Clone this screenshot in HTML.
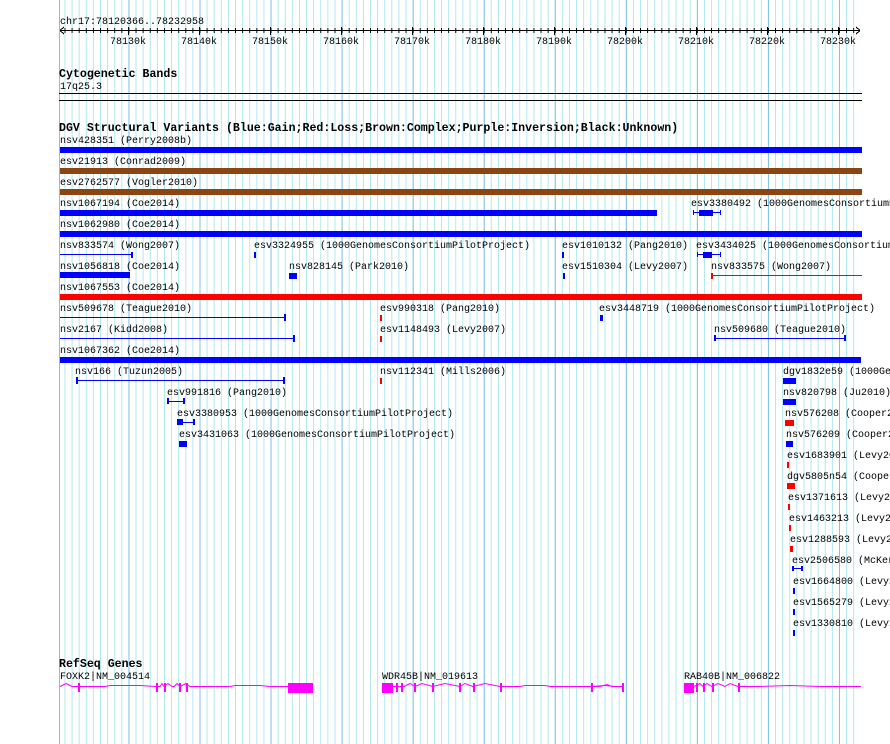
<!DOCTYPE html>
<html><head><meta charset="utf-8"><style>
html,body{margin:0;padding:0;background:#fff;width:890px;height:744px;overflow:hidden}
svg{display:block}
text{font-family:"Liberation Mono",monospace;font-size:10px;fill:#000;transform:translateY(-1px)}
.b{font-weight:bold;font-size:11.6px}
</style></head><body>
<svg width="890" height="744" xmlns="http://www.w3.org/2000/svg" shape-rendering="crispEdges">
<defs>
<pattern id="mn" patternUnits="userSpaceOnUse" x="57.4" y="0" width="7.1053" height="744"><rect x="0" y="0" width="1" height="744" fill="#aee8f0"/></pattern>
<pattern id="mj" patternUnits="userSpaceOnUse" x="57.4" y="0" width="71.053" height="744"><rect x="0" y="0" width="1" height="744" fill="#80c0ea"/></pattern>
<pattern id="tk" patternUnits="userSpaceOnUse" x="57.4" y="28" width="7.1053" height="5"><rect x="0" y="0" width="1" height="5" fill="#000"/></pattern>
</defs>
<rect x="62" y="0" width="798" height="744" fill="url(#mn)"/>
<rect x="62" y="0" width="798" height="744" fill="url(#mj)"/>
<rect x="59" y="0" width="1" height="744" fill="#80c0ea"/>

<text x="60" y="25">chr17:78120366..78232958</text>
<rect x="60" y="30" width="800" height="1" fill="#000"/>
<path d="M60 30.5 L64 27 M60 30.5 L64 34 M860 30.5 L856 27 M860 30.5 L856 34" stroke="#000" stroke-width="1" fill="none"/>
<rect x="62" y="28" width="798" height="5" fill="url(#tk)"/>
<g fill="#000">
<rect x="128" y="27" width="1" height="8"/><rect x="199" y="27" width="1" height="8"/><rect x="270" y="27" width="1" height="8"/><rect x="341" y="27" width="1" height="8"/><rect x="412" y="27" width="1" height="8"/><rect x="483" y="27" width="1" height="8"/><rect x="554" y="27" width="1" height="8"/><rect x="625" y="27" width="1" height="8"/><rect x="696" y="27" width="1" height="8"/><rect x="767" y="27" width="1" height="8"/><rect x="838" y="27" width="1" height="8"/>
</g>
<g text-anchor="middle">
<text x="128" y="45">78130k</text><text x="199" y="45">78140k</text><text x="270" y="45">78150k</text><text x="341" y="45">78160k</text><text x="412" y="45">78170k</text><text x="483" y="45">78180k</text><text x="554" y="45">78190k</text><text x="625" y="45">78200k</text><text x="696" y="45">78210k</text><text x="767" y="45">78220k</text><text x="838" y="45">78230k</text>
</g>

<text class="b" x="59" y="78">Cytogenetic Bands</text>
<text x="60" y="90">17q25.3</text>
<rect x="59" y="93" width="803" height="1" fill="#000"/>
<rect x="59" y="100" width="803" height="1" fill="#000"/>

<text class="b" x="59" y="132">DGV Structural Variants (Blue:Gain;Red:Loss;Brown:Complex;Purple:Inversion;Black:Unknown)</text>
<text x="60" y="144">nsv428351 (Perry2008b)</text>
<rect x="60" y="147" width="802" height="6" fill="#0000ff"/>
<text x="60" y="165">esv21913 (Conrad2009)</text>
<rect x="60" y="168" width="802" height="6" fill="#8b4513"/>
<text x="60" y="186">esv2762577 (Vogler2010)</text>
<rect x="60" y="189" width="802" height="6" fill="#8b4513"/>
<text x="60" y="207">nsv1067194 (Coe2014)</text>
<rect x="60" y="210" width="597" height="6" fill="#0000ff"/>
<text x="691" y="207">esv3380492 (1000GenomesConsortiumPilotProject)</text>
<g fill="#0000ff"><rect x="693" y="212" width="27" height="1"/><rect x="693" y="210" width="1" height="5"/><rect x="720" y="210" width="1" height="5"/><rect x="699" y="210" width="14" height="6"/></g>
<text x="60" y="228">nsv1062980 (Coe2014)</text>
<rect x="60" y="231" width="802" height="6" fill="#0000ff"/>

<text x="60" y="249">nsv833574 (Wong2007)</text>
<g fill="#0000ff"><rect x="60" y="254" width="72" height="1"/><rect x="131" y="252" width="2" height="6"/>
<rect x="254" y="252" width="2" height="6"/><rect x="562" y="252" width="2" height="6"/>
<rect x="697" y="254" width="24" height="1"/><rect x="697" y="252" width="1" height="5"/><rect x="720" y="252" width="1" height="5"/><rect x="703" y="252" width="9" height="6"/></g>
<text x="254" y="249">esv3324955 (1000GenomesConsortiumPilotProject)</text>
<text x="562" y="249">esv1010132 (Pang2010)</text>
<text x="696" y="249">esv3434025 (1000GenomesConsortiumPilotProject)</text>

<text x="60" y="270">nsv1056818 (Coe2014)</text>
<text x="289" y="270">nsv828145 (Park2010)</text>
<text x="562" y="270">esv1510304 (Levy2007)</text>
<text x="711" y="270">nsv833575 (Wong2007)</text>
<g fill="#0000ff"><rect x="60" y="272" width="70" height="6"/><rect x="289" y="273" width="8" height="6"/><rect x="563" y="273" width="2" height="6"/></g>
<g fill="#ff0000"><rect x="711" y="275" width="151" height="1"/><rect x="711" y="273" width="2" height="6"/></g>

<text x="60" y="291">nsv1067553 (Coe2014)</text>
<rect x="60" y="294" width="802" height="6" fill="#ff0000"/>

<text x="60" y="312">nsv509678 (Teague2010)</text>
<text x="380" y="312">esv990318 (Pang2010)</text>
<text x="599" y="312">esv3448719 (1000GenomesConsortiumPilotProject)</text>
<g fill="#0000ff"><rect x="60" y="317" width="225" height="1"/><rect x="284" y="314" width="2" height="7"/><rect x="600" y="315" width="3" height="6"/></g>
<rect x="380" y="315" width="2" height="6" fill="#ff0000"/>

<text x="60" y="333">nsv2167 (Kidd2008)</text>
<text x="380" y="333">esv1148493 (Levy2007)</text>
<text x="714" y="333">nsv509680 (Teague2010)</text>
<g fill="#0000ff"><rect x="60" y="338" width="234" height="1"/><rect x="293" y="335" width="2" height="7"/>
<rect x="714" y="338" width="131" height="1"/><rect x="714" y="335" width="2" height="6"/><rect x="844" y="335" width="2" height="6"/></g>
<rect x="380" y="336" width="2" height="6" fill="#ff0000"/>

<text x="60" y="354">nsv1067362 (Coe2014)</text>
<rect x="60" y="357" width="801" height="6" fill="#0000ff"/>

<text x="75" y="375">nsv166 (Tuzun2005)</text>
<text x="380" y="375">nsv112341 (Mills2006)</text>
<text x="783" y="375">dgv1832e59 (1000GenomesConsortiumPilotProject)</text>
<g fill="#0000ff"><rect x="76" y="380" width="208" height="1"/><rect x="76" y="377" width="2" height="7"/><rect x="283" y="377" width="2" height="7"/><rect x="783" y="378" width="13" height="6"/></g>
<rect x="380" y="378" width="2" height="6" fill="#ff0000"/>

<text x="167" y="396">esv991816 (Pang2010)</text>
<text x="783" y="396">nsv820798 (Ju2010)</text>
<g fill="#0000ff"><rect x="167" y="401" width="17" height="1"/><rect x="167" y="398" width="2" height="6"/><rect x="183" y="398" width="2" height="6"/><rect x="783" y="399" width="13" height="6"/></g>

<text x="177" y="417">esv3380953 (1000GenomesConsortiumPilotProject)</text>
<text x="785" y="417">nsv576208 (Cooper2008)</text>
<g fill="#0000ff"><rect x="177" y="422" width="17" height="1"/><rect x="177" y="419" width="2" height="6"/><rect x="193" y="419" width="2" height="6"/><rect x="179" y="419" width="4" height="6"/></g>
<rect x="785" y="420" width="9" height="6" fill="#ff0000"/>

<text x="179" y="438">esv3431063 (1000GenomesConsortiumPilotProject)</text>
<text x="786" y="438">nsv576209 (Cooper2008)</text>
<g fill="#0000ff"><rect x="179" y="441" width="8" height="6"/><rect x="786" y="441" width="7" height="6"/></g>

<text x="787" y="459">esv1683901 (Levy2007)</text>
<rect x="787" y="462" width="2" height="6" fill="#ff0000"/>
<text x="787" y="480">dgv5805n54 (Cooper2008)</text>
<rect x="787" y="483" width="8" height="6" fill="#ff0000"/>
<text x="788" y="501">esv1371613 (Levy2007)</text>
<rect x="788" y="504" width="2" height="6" fill="#ff0000"/>
<text x="789" y="522">esv1463213 (Levy2007)</text>
<rect x="789" y="525" width="2" height="6" fill="#ff0000"/>
<text x="790" y="543">esv1288593 (Levy2007)</text>
<rect x="790" y="546" width="3" height="6" fill="#ff0000"/>
<text x="792" y="564">esv2506580 (McKernan2009)</text>
<g fill="#0000ff"><rect x="792" y="568" width="10" height="1"/><rect x="792" y="566" width="2" height="5"/><rect x="801" y="566" width="2" height="5"/></g>
<text x="793" y="585">esv1664800 (Levy2007)</text>
<rect x="793" y="588" width="2" height="6" fill="#0000ff"/>
<text x="793" y="606">esv1565279 (Levy2007)</text>
<rect x="793" y="609" width="2" height="6" fill="#0000ff"/>
<text x="793" y="627">esv1330810 (Levy2007)</text>
<rect x="793" y="630" width="2" height="6" fill="#0000ff"/>

<text class="b" x="59" y="668">RefSeq Genes</text>
<text x="60" y="680">FOXK2|NM_004514</text>
<text x="382" y="680">WDR45B|NM_019613</text>
<text x="684" y="680">RAB40B|NM_006822</text>
<g fill="none" stroke="#ff00ff" stroke-width="1" shape-rendering="auto">
<polyline points="60,686.5 66,683.5 72,686.5 78,686.5 105,686.5 110,685.5 140,685.5 156,686.5 160,686.5 162,683.5 164,686.5 168,683.5 172,686.5 174,686.5 177,683.5 180,686.5 186,683.5 190,686.5 230,686.5 235,685.5 260,685.5 270,686.5 288,686.5"/>
<polyline points="393,686.5 396,686.5 400,686.5 404,686.5 410,683.5 415,686.5 422,683.5 433,686.5 445,683.5 460,686.5 465,683.5 473,686.5 485,683.5 500,686.5 520,686.5 525,685.5 545,685.5 550,686.5 580,686.5 592,686.5 605,685.5 615,686.5 624,686.5"/>
<polyline points="560,686.5 575,686.5 591,686.5 600,686.5 607,684.5 612,686.5 623,686.5"/>
<polyline points="694,686.5 700,683.5 703,686.5 707,683.5 712,686.5 718,683.5 725,686.5 730,683.5 738,686.5 750,686.5 760,686.5 790,685.5 820,686.5 861,686.5"/>
</g>
<g fill="#ff00ff">
<rect x="78" y="683" width="2" height="9"/><rect x="156" y="683" width="2" height="9"/><rect x="164" y="683" width="2" height="9"/><rect x="179" y="683" width="2" height="9"/><rect x="186" y="683" width="2" height="9"/>
<rect x="288" y="683" width="25" height="10"/>
<rect x="382" y="683" width="11" height="10"/><rect x="396" y="683" width="2" height="9"/><rect x="401" y="683" width="2" height="9"/><rect x="414" y="683" width="2" height="9"/><rect x="432" y="683" width="2" height="9"/><rect x="459" y="683" width="2" height="9"/><rect x="473" y="683" width="2" height="9"/><rect x="500" y="683" width="2" height="9"/><rect x="591" y="683" width="2" height="9"/><rect x="622" y="683" width="2" height="9"/>
<rect x="684" y="683" width="10" height="10"/><rect x="696" y="683" width="2" height="9"/><rect x="703" y="683" width="2" height="9"/><rect x="712" y="683" width="2" height="9"/><rect x="738" y="683" width="2" height="9"/>
</g>
</svg>
</body></html>
